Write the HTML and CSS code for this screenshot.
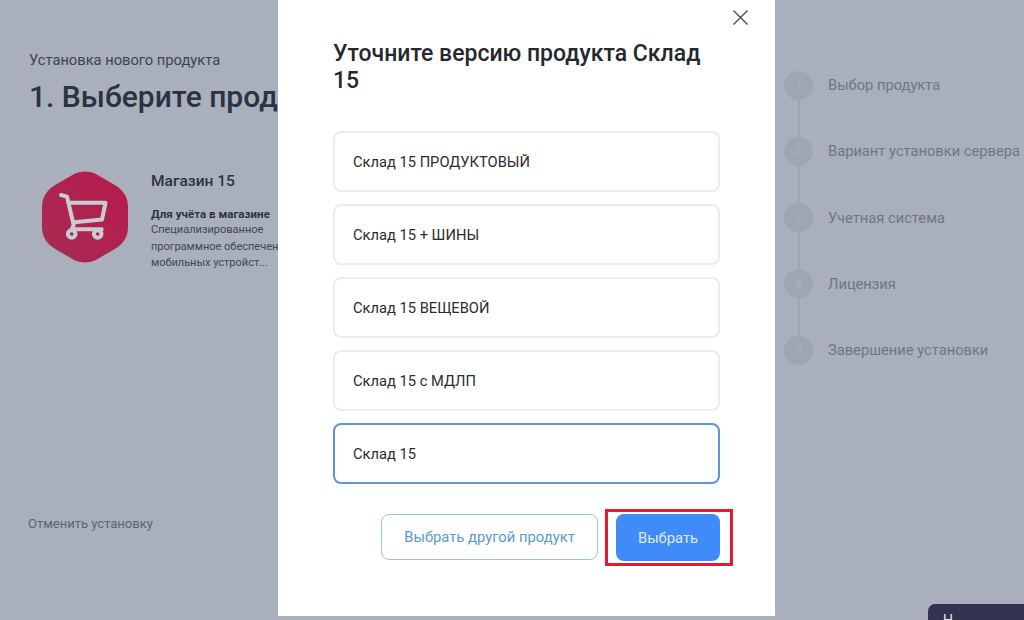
FILE: index.html
```html
<!DOCTYPE html>
<html lang="ru">
<head>
<meta charset="utf-8">
<title>Установка нового продукта</title>
<link rel="stylesheet" href="styles.css">
</head>
<body>
<div class="page">
  <main class="main">
    <p class="crumb">Установка нового продукта</p>
    <h1 class="heading">1. Выберите продукт</h1>
    <section class="card">
      <svg class="hex" width="86" height="92" viewBox="0 0 86 92" aria-hidden="true">
        <defs>
          <linearGradient id="hexfill" x1="0" y1="1" x2="1" y2="0">
            <stop offset="0" stop-color="#a62c52"/>
            <stop offset="1" stop-color="#b71a4d"/>
          </linearGradient>
        </defs>
        <path fill="url(#hexfill)" d="M33 2.500Q43-1.500 53 2.500L72 13.500Q86 21.500 86 36V56Q86 70.500 72 78.500L53 89.500Q43 93.500 33 89.500L14 78.500Q0 70.500 0 56V36Q0 21.500 14 13.500Z"/>
        <g fill="none" stroke="#c9cbd4" stroke-width="4" stroke-linejoin="round" stroke-linecap="round">
          <path d="M19 24L25 25.700L31.700 54L29.700 58.300H59.700"/>
          <path d="M26.700 31.800H63.500L60 48.500L32.300 51.200"/>
          <circle cx="29.700" cy="63" r="3.800"/>
          <circle cx="55.700" cy="63" r="3.800"/>
        </g>
      </svg>
      <div class="card-body">
        <h2 class="card-title">Магазин 15</h2>
        <p class="card-lead">Для учёта в магазине</p>
        <p class="card-text">Специализированное<br>программное обеспечение для<br>мобильных устройст...</p>
      </div>
    </section>
    <a class="cancel">Отменить установку</a>
  </main>
  <ol class="steps">
    <li class="step"><span class="dot">1</span><span class="step-name">Выбор продукта</span></li>
    <li class="step"><span class="dot">2</span><span class="step-name">Вариант установки сервера</span></li>
    <li class="step"><span class="dot">3</span><span class="step-name">Учетная система</span></li>
    <li class="step"><span class="dot">4</span><span class="step-name">Лицензия</span></li>
    <li class="step"><span class="dot">5</span><span class="step-name">Завершение установки</span></li>
  </ol>
</div>
<div class="overlay">
  <div class="modal">
    <svg class="close" width="17" height="17" viewBox="0 0 17 17" aria-hidden="true"><path d="M1.500 1.500L15.500 15.500M15.500 1.500L1.500 15.500" fill="none" stroke="#4a4d52" stroke-width="1.400"/></svg>
    <h2 class="modal-title">Уточните версию продукта Склад 15</h2>
    <div class="options">
      <div class="option">Склад 15 ПРОДУКТОВЫЙ</div>
      <div class="option">Склад 15 + ШИНЫ</div>
      <div class="option">Склад 15 ВЕЩЕВОЙ</div>
      <div class="option">Склад 15 с МДЛП</div>
      <div class="option option-active">Склад 15</div>
    </div>
    <div class="actions">
      <button class="btn btn-outline">Выбрать другой продукт</button>
      <span class="marked"><button class="btn btn-primary">Выбрать</button></span>
    </div>
  </div>
</div>
<div class="chat">Н</div>
</body>
</html>
```
FILE: styles.css
```css
* { box-sizing: border-box; }
html, body { margin: 0; height: 620px; overflow: hidden; }
body { background: #a9b0bb; font-family: Roboto, "Liberation Sans", sans-serif; position: relative; }
.page { display: flex; height: 620px; }
.main { width: 784px; flex: none; padding: 51px 0 0 29px; display: flex; flex-direction: column; }
.crumb { margin: 0; font-size: 14.700px; line-height: 18px; color: #3c4453; }
.heading { margin: 8px 0 0; font-size: 30px; line-height: 40px; font-weight: 500; color: #2a3341; white-space: nowrap; }
.card { margin-top: 34px; width: 500px; height: 162px; border: 1px solid #a4abb6; border-radius: 8px; padding: 19px 0 0 12px; display: flex; }
.hex { flex: none; }
.card-body { margin-left: 23px; }
.card-title { margin: 0; font-size: 15.500px; line-height: 20px; font-weight: 500; color: #2c3442; }
.card-lead { margin: 15px 0 0; font-size: 11.600px; line-height: 16px; font-weight: 700; color: #2c3442; }
.card-text { margin: 0; font-size: 11px; line-height: 16.500px; color: #3f4757; white-space: nowrap; }
.cancel { margin-top: 203px; font-size: 13px; line-height: 16px; color: #5c6473; margin-left: -1px; }
.steps { list-style: none; margin: 0; padding: 52px 0 0 0; flex: none; }
.step { height: 66.250px; display: flex; align-items: center; gap: 15px; position: relative; }
.step:not(:last-child)::after { content: ""; position: absolute; left: 13.500px; top: 47px; width: 2px; height: 40px; background: #9fa6b1; }
.dot { width: 29px; height: 29px; flex: none; border-radius: 50%; background: #9fa6b1; color: #a8aeb9; font-size: 12px; font-weight: 500; display: flex; align-items: center; justify-content: center; }
.step-name { font-size: 14.700px; color: #6f7684; white-space: nowrap; }
.overlay { position: absolute; inset: 0; padding-left: 278px; }
.modal { position: relative; width: 497px; height: 616px; background: #fff; padding: 40px 55px 0; }
.close { position: absolute; left: 454px; top: 9px; }
.modal-title { margin: 0; font-size: 23px; line-height: 27px; font-weight: 500; color: #25282d; }
.options { margin-top: 37px; display: flex; flex-direction: column; gap: 12px; }
.option { height: 61px; border: 2px solid #ececee; border-radius: 8px; padding: 0 18px; display: flex; align-items: center; font-size: 14.700px; color: #2b2d30; }
.option-active { border-color: #5b97d8; }
.actions { margin-top: 30px; display: flex; justify-content: flex-end; gap: 18px; }
.btn { font: inherit; font-size: 14.800px; border-radius: 8px; height: 46px; cursor: pointer; }
.btn-outline { width: 217px; background: #fff; border: 1px solid #9ec4dc; color: #5b9ac9; }
.btn-primary { display: block; width: 104px; height: 47px; background: #3f8bf8; border: 0; color: #dfeafa; }
.marked { position: relative; display: block; }
.marked::after { content: ""; position: absolute; left: -11px; right: -13px; top: -5px; bottom: -5px; border: 3px solid #e31b2c; }
.chat { position: absolute; left: 928px; top: 604px; width: 96px; height: 40px; background: #32344f; border-radius: 7px 0 0 0; color: #e8e8ee; font-size: 14px; line-height: 16px; padding: 8px 0 0 15px; }
```
